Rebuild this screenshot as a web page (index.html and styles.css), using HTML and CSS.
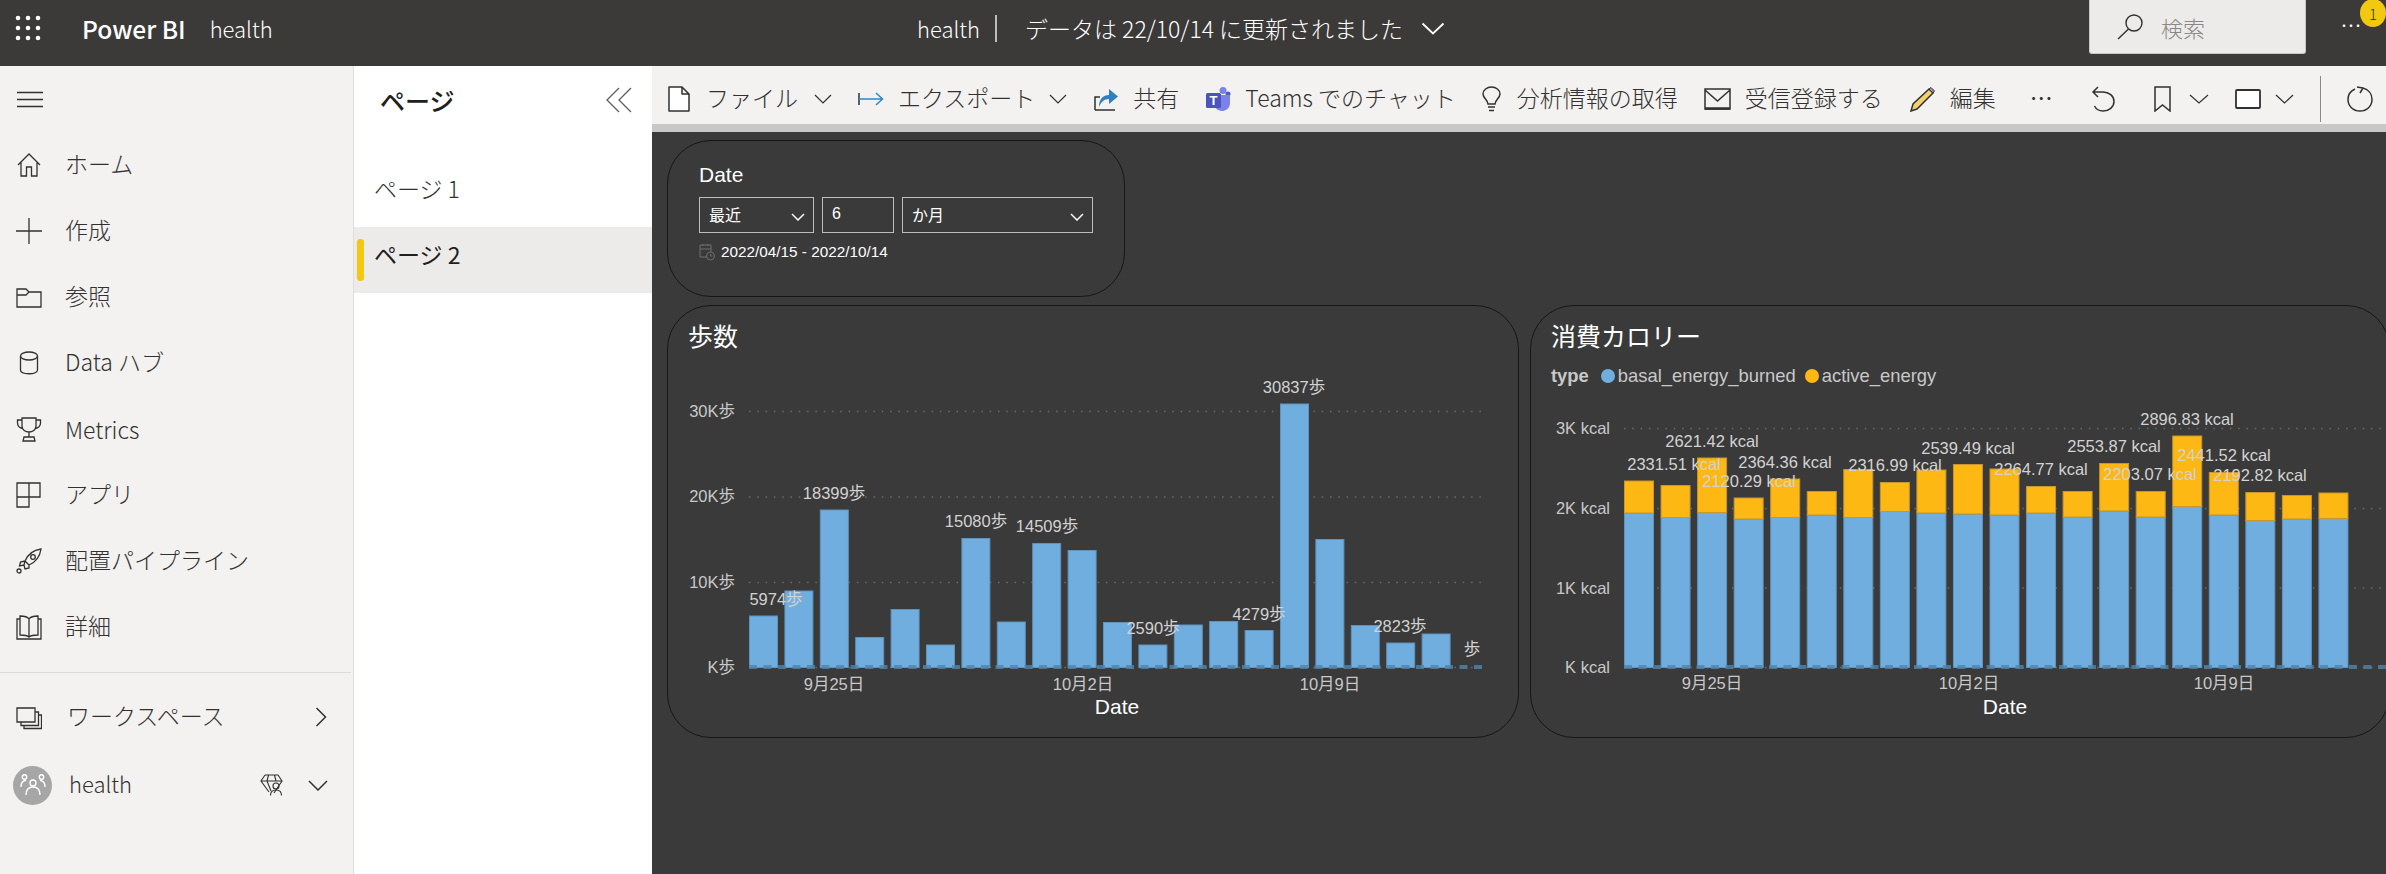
FILE: index.html
```html
<!DOCTYPE html>
<html lang="ja">
<head>
  <meta charset="UTF-8">
  <meta name="viewport" content="width=device-width, initial-scale=1.0">
  <title>health - Power BI</title>
  <link rel="stylesheet" href="styles.css">
</head>
<body>
  <!-- top bar -->
  <header class="topbar">
    <div class="brand">
      <svg class="waffle" width="26" height="26" viewBox="0 0 26 26" fill="#fff">
        <circle cx="3" cy="3" r="2.3"/><circle cx="13" cy="3" r="2.3"/><circle cx="23" cy="3" r="2.3"/>
        <circle cx="3" cy="13" r="2.3"/><circle cx="13" cy="13" r="2.3"/><circle cx="23" cy="13" r="2.3"/>
        <circle cx="3" cy="23" r="2.3"/><circle cx="13" cy="23" r="2.3"/><circle cx="23" cy="23" r="2.3"/>
      </svg>
      <span class="product">Power BI</span>
      <span class="workspace-name">health</span>
    </div>
    <div class="status">
      <span class="status-name">health</span>
      <span class="status-sep"></span>
      <span>データは 22/10/14 に更新されました</span>
      <svg width="24" height="13" viewBox="0 0 24 13" fill="none" stroke="#fff" stroke-width="1.8"><path d="M1.500 1.500 L12 11.500 L22.500 1.500"/></svg>
    </div>
    <div class="search">
      <svg width="27" height="26" viewBox="0 0 27 26" fill="none" stroke="#323130" stroke-width="1.4"><circle cx="17" cy="9" r="8"/><path d="M11.500 15 L1 25"/></svg>
      <span>検索</span>
    </div>
    <div class="more">
      <span class="more-dots">...</span>
      <span class="badge">1</span>
    </div>
  </header>

  <div class="app">
    <!-- left nav -->
    <nav class="sidebar">
      <div class="nav-toggle">
        <svg width="26" height="18" viewBox="0 0 26 18" stroke="#323130" stroke-width="1.6"><path d="M0 1.500H26M0 8.500H26M0 15.500H26"/></svg>
      </div>
      <ul class="nav-list">
        <li class="nav-item">
          <svg class="icon" viewBox="0 0 26 26"><path d="M2 13 L13 2 L24 13 M5 10 V24 H10.500 V15 H15.500 V24 H21 V10"/></svg>
          <span>ホーム</span>
        </li>
        <li class="nav-item">
          <svg class="icon" viewBox="0 0 26 26"><path d="M0 13H26M13 0V26"/></svg>
          <span>作成</span>
        </li>
        <li class="nav-item">
          <svg class="icon" viewBox="0 0 26 26"><path d="M1 5 H10 L13 8 H25 V23 H1 Z M1 11 H10 L13 8"/></svg>
          <span>参照</span>
        </li>
        <li class="nav-item">
          <svg class="icon" viewBox="0 0 26 26"><ellipse cx="13" cy="6" rx="8.500" ry="4"/><path d="M4.500 6 V20 C4.500 25 21.500 25 21.500 20 V6"/></svg>
          <span>Data ハブ</span>
        </li>
        <li class="nav-item">
          <svg class="icon" viewBox="0 0 26 26"><path d="M6 2 H20 V10 C20 14 16.500 16 13 16 C9.500 16 6 14 6 10 Z M6 4 H1.500 V7 C1.500 10 4 12 7 12.500 M20 4 H24.500 V7 C24.500 10 22 12 19 12.500 M13 16 V21 M8 21 H18 L19 25 H7 Z"/></svg>
          <span class="nav-latin">Metrics</span>
        </li>
        <li class="nav-item">
          <svg class="icon" viewBox="0 0 26 26"><path d="M1 1 H24 V15 H13 V25 H1 Z M13 1 V15 H1"/></svg>
          <span>アプリ</span>
        </li>
        <li class="nav-item">
          <svg class="icon" viewBox="0 0 26 26"><path d="M25 1 C18 2 12 6 9 13 L13 17 C20 14 24 8 25 1 Z M9 13 L4.500 14 L3.500 18 L8 17 L9 21 L13 20 L13 17 M9 13 L8 17"/><circle cx="17" cy="9" r="2.300"/><circle cx="3" cy="23" r="2"/></svg>
          <span>配置パイプライン</span>
        </li>
        <li class="nav-item">
          <svg class="icon" viewBox="0 0 26 26"><path d="M13 5 C11 2 7 2 4 2 V21 C7 21 11 21 13 23 C15 21 19 21 22 21 V2 C19 2 15 2 13 5 Z M13 5 V23 M4 5 H1 V25 H25 V5 H22"/></svg>
          <span>詳細</span>
        </li>
      </ul>
      <div class="nav-divider"></div>
      <div class="nav-item workspace-row">
        <svg class="icon" viewBox="0 0 26 26"><path d="M1 4 H19 V18 H1 Z M19 8 H22.500 V21.500 H5 V18 M22.500 11 H25.500 V24.500 H8 V21.500"/></svg>
        <span>ワークスペース</span>
        <svg class="row-end" width="12" height="20" viewBox="0 0 12 20" fill="none" stroke="#323130" stroke-width="1.500"><path d="M1.500 1 L10.500 10 L1.500 19"/></svg>
      </div>
      <div class="nav-item health-row">
        <i class="avatar">
          <svg width="26" height="24" viewBox="0 0 26 24" fill="none" stroke="#fff" stroke-width="1.400"><circle cx="13" cy="10" r="3"/><circle cx="4.500" cy="4" r="2.200"/><circle cx="21.500" cy="4" r="2.200"/><path d="M6 22 C6 16 9 14 13 14 C17 14 20 16 20 22 M1 14 C1 9 3 7.500 6 7.500 M25 14 C25 9 23 7.500 20 7.500"/></svg>
        </i>
        <span>health</span>
        <svg class="diamond" width="23" height="22" viewBox="0 0 23 22" fill="none" stroke="#323130" stroke-width="1.100"><path d="M5 1 H18 L22 7 L14 19 M5 1 L1 7 L9 18 M1 7 H22 M8.500 1 L7 7 L11 17 M14.500 1 L16 7"/><circle cx="16" cy="12" r="3"/><path d="M10.500 21.500 C10.500 17.500 13 16 16 16 C19 16 21.500 17.500 21.500 21.500"/></svg>
        <svg class="row-chevron" width="20" height="11" viewBox="0 0 20 11" fill="none" stroke="#323130" stroke-width="1.500"><path d="M1 1 L10 10 L19 1"/></svg>
      </div>
    </nav>

    <!-- pages pane -->
    <aside class="pages">
      <div class="pages-head">
        <h2>ページ</h2>
        <svg width="26" height="26" viewBox="0 0 26 26" fill="none" stroke="#605e5c" stroke-width="1.300"><path d="M13 1 L1 13 L13 25 M25 1 L13 13 L25 25"/></svg>
      </div>
      <div class="page-row"><i class="page-mark"></i><span>ページ 1</span></div>
      <div class="page-row is-active"><i class="page-mark"></i><span>ページ 2</span></div>
    </aside>

    <main class="report">
      <!-- command bar -->
      <div class="toolbar">
        <div class="tool tool-file">
          <svg width="22" height="26" viewBox="0 0 22 26" fill="#fff" stroke="#323130" stroke-width="1.500"><path d="M1 1 H14 L21 8 V25 H1 Z M14 1 V8 H21" stroke-linejoin="round"/></svg>
          <span>ファイル</span>
          <svg class="chev" width="18" height="10" viewBox="0 0 18 10" fill="none" stroke="#323130" stroke-width="1.200"><path d="M1 1 L9 9 L17 1"/></svg>
        </div>
        <div class="tool">
          <svg width="26" height="16" viewBox="0 0 26 16" fill="none" stroke-width="1.500"><path d="M1 2 V14" stroke="#323130"/><path d="M1 8 H24 M18 2 L24.500 8 L18 14" stroke="#2b88c8"/></svg>
          <span>エクスポート</span>
          <svg class="chev" width="18" height="10" viewBox="0 0 18 10" fill="none" stroke="#323130" stroke-width="1.200"><path d="M1 1 L9 9 L17 1"/></svg>
        </div>
        <div class="tool">
          <svg width="26" height="24" viewBox="0 0 26 24"><path d="M2 23 H22 M2 23 V10 H7" fill="none" stroke="#323130" stroke-width="1.500"/><path d="M6 20 C6 12 10 8 16 8 V2 L25 9.500 L16 17 V12 C11 12 8 15 6 20 Z" fill="#2f7fc1"/></svg>
          <span>共有</span>
        </div>
        <div class="tool">
          <svg width="26" height="26" viewBox="0 0 26 26"><circle cx="18" cy="4.500" r="3.500" fill="#7b83eb"/><circle cx="23" cy="8" r="2.500" fill="#5059c9"/><path d="M14 9 H25 V17 C25 23 20 25 17 25 C13 25 9 22 9 17 V9 Z" fill="#7b83eb"/><rect x="1" y="7" width="15" height="15" rx="1.500" fill="#4b53bc"/><text class="teams-t" x="8.500" y="19">T</text></svg>
          <span>Teams でのチャット</span>
        </div>
        <div class="tool tool-insight">
          <svg width="19" height="26" viewBox="0 0 19 26" fill="none" stroke="#323130" stroke-width="1.500"><path d="M6 18 C6 14 1 12 1 8 C1 4 5 1 9.500 1 C14 1 18 4 18 8 C18 12 13 14 13 18 Z M6 21 H13 M7 24.500 H12"/></svg>
          <span>分析情報の取得</span>
        </div>
        <div class="tool">
          <svg width="27" height="22" viewBox="0 0 27 22" fill="none" stroke="#323130" stroke-width="1.500"><path d="M1 1 H26 V21 H1 Z M1 2 L13.500 13 L26 2"/><path d="M1 20.500 H26" stroke-width="2.500"/></svg>
          <span>受信登録する</span>
        </div>
        <div class="tool">
          <svg width="27" height="26" viewBox="0 0 27 26"><path d="M20 3 L24 7 L8 23 L2 25 L4 18 Z" fill="#f2d06b" stroke="#323130" stroke-width="1.500"/><path d="M20 3 L22 1.500 L25.500 5 L24 7 Z" fill="#b98ac8" stroke="#323130"/></svg>
          <span>編集</span>
        </div>
        <div class="tool tool-dots"><span>…</span></div>
        <div class="tool tool-undo">
          <svg width="24" height="26" viewBox="0 0 24 26" fill="none" stroke="#323130" stroke-width="1.500"><path d="M7 1 L2 6 L7 11 M2 6 H12 C18 6 23 10 23 15.500 C23 21 18 25 12 25 C8 25 5 23 3.500 20"/></svg>
        </div>
        <div class="tool tool-mark">
          <svg width="17" height="26" viewBox="0 0 17 26" fill="none" stroke="#323130" stroke-width="1.500"><path d="M1 1 H16 V25 L8.500 19 L1 25 Z"/></svg>
          <svg class="chev" width="20" height="10" viewBox="0 0 20 10" fill="none" stroke="#323130" stroke-width="1.200"><path d="M1 1 L10 9 L19 1"/></svg>
        </div>
        <div class="tool tool-view">
          <svg width="26" height="20" viewBox="0 0 26 20" fill="#fff" stroke="#323130" stroke-width="1.800"><rect x="1" y="1" width="24" height="18" rx="1"/></svg>
          <svg class="chev" width="19" height="10" viewBox="0 0 19 10" fill="none" stroke="#323130" stroke-width="1.200"><path d="M1 1 L9.500 9 L18 1"/></svg>
        </div>
        <div class="tool-sep"></div>
        <div class="tool tool-refresh">
          <svg width="26" height="26" viewBox="0 0 26 26" fill="none" stroke="#323130" stroke-width="1.500"><path d="M8 3 C3.500 5 1 9 1 13.500 C1 20 6 25 13 25 C20 25 25 20 25 13.500 C25 8 21.500 3.500 16 2 M16 2 L10 1 M16 2 L13 7"/></svg>
        </div>
      </div>
      <div class="toolbar-edge"></div>

      <!-- canvas -->
      <div class="canvas">
        <section class="card slicer">
          <div class="slicer-title">Date</div>
          <div class="slicer-fields">
            <div class="field field-mode">
              <span>最近</span>
              <svg width="14" height="8" viewBox="0 0 14 8" fill="none" stroke="#fff" stroke-width="1.500"><path d="M1 1 L7 7 L13 1"/></svg>
            </div>
            <div class="field field-num"><span>6</span></div>
            <div class="field field-unit">
              <span>か月</span>
              <svg width="14" height="8" viewBox="0 0 14 8" fill="none" stroke="#fff" stroke-width="1.500"><path d="M1 1 L7 7 L13 1"/></svg>
            </div>
          </div>
          <div class="slicer-range">
            <svg width="16" height="18" viewBox="0 0 16 18" fill="none" stroke="#6e6e6e" stroke-width="1"><path d="M8 14 H1 V2 H12 V9 M1 6 H12 M4 1 V3 M9 1 V3"/><circle cx="11.500" cy="13" r="4"/><path d="M11.500 11 V13 H13.500"/></svg>
            <span>2022/04/15 - 2022/10/14</span>
          </div>
        </section>

        <div class="chart-row">
          <section class="card chart-card chart-steps">
            <h3 class="chart-title">歩数</h3>
            <svg id="stepsChart" class="chart" width="850" height="383" viewBox="668 353 850 383"></svg>
          </section>
          <section class="card chart-card chart-energy">
            <h3 class="chart-title">消費カロリー</h3>
            <div class="legend">
              <b>type</b>
              <span class="legend-item"><i class="dot dot-blue"></i>basal_energy_burned</span>
              <span class="legend-item"><i class="dot dot-gold"></i>active_energy</span>
            </div>
            <svg id="energyChart" class="chart" width="858" height="337" viewBox="1531 399 858 337"></svg>
          </section>
        </div>
      </div>
    </main>
  </div>

  <script src="charts.js"></script>
</body>
</html>
```

FILE: styles.css
```css
* {
  box-sizing: border-box;
}
html, body {
  margin: 0;
  height: 100%;
  overflow: hidden;
}
body {
  font-family: "Noto Sans CJK JP", sans-serif;
  font-weight: 300;
  font-size: 23px;
  color: #323130;
  background: #3a3a3a;
}

/* top bar */
.topbar {
  height: 66px;
  background: #3b3a39;
  color: #fff;
  display: flex;
  align-items: flex-start;
  position: relative;
}
.brand {
  width: 917px;
  height: 56px;
  display: flex;
  align-items: center;
  padding-left: 15px;
}
.product {
  margin-left: 41px;
  font-size: 24.500px;
  font-weight: 500;
}
.workspace-name {
  margin-left: 24px;
  font-size: 22px;
}
.status {
  height: 56px;
  display: flex;
  align-items: center;
  font-size: 23px;
}
.status-name {
  font-size: 22px;
  width: 62px;
}
.status-sep {
  width: 2px;
  height: 27px;
  background: #bdbdbd;
  margin: 0 28px 0 16px;
}
.status svg {
  margin-left: 18px;
}
.search {
  margin-left: auto;
  width: 217px;
  height: 54px;
  background: #edebe9;
  border: 1px solid #c8c6c4;
  border-top: 0;
  border-radius: 0 0 3px 3px;
  display: flex;
  align-items: center;
  padding-left: 27px;
  gap: 17px;
  font-size: 22px;
  color: #8a8886;
}
.more {
  width: 80px;
  position: relative;
  height: 54px;
}
.more-dots {
  position: absolute;
  left: 35px;
  top: -1px;
  font-size: 24px;
  letter-spacing: 1px;
  color: #fff;
}
.badge {
  position: absolute;
  right: 0;
  top: -1px;
  width: 26px;
  height: 28px;
  border-radius: 50%;
  background: #f2c811;
  color: #323130;
  font-size: 15px;
  text-align: center;
  line-height: 30px;
}

.app {
  display: flex;
  height: 808px;
}

/* left nav */
.sidebar {
  width: 354px;
  flex-shrink: 0;
  background: #f3f2f1;
  border-right: 1px solid #e1dfdd;
}
.nav-toggle {
  height: 68px;
  margin-bottom: -2px;
  display: flex;
  align-items: center;
  padding-left: 17px;
}
.nav-list {
  list-style: none;
  margin: 0;
  padding: 0;
}
.nav-item {
  height: 66px;
  display: flex;
  align-items: center;
  padding-left: 16px;
}
.nav-item span {
  padding-bottom: 5px;
}
.nav-item .nav-latin {
  padding-bottom: 1px;
}
.icon {
  width: 26px;
  height: 26px;
  margin-right: 23px;
  flex-shrink: 0;
  fill: none;
  stroke: #323130;
  stroke-width: 1.3;
}
.nav-divider {
  height: 1px;
  margin-top: 12px;
  background: #dcdbd9;
  margin-right: 2px;
}
.workspace-row {
  margin-top: 10px;
  height: 68px;
}
.workspace-row .icon {
  margin-right: 25px;
}
.row-end {
  margin-left: auto;
  margin-right: 26px;
}
.health-row {
  height: 68px;
  padding-left: 13px;
  font-size: 22px;
}
.avatar {
  width: 39px;
  height: 39px;
  border-radius: 50%;
  background: #a6a6a6;
  display: flex;
  align-items: center;
  justify-content: center;
  margin-right: 17px;
}
.diamond {
  margin-left: auto;
}
.row-chevron {
  margin: 0 25px 0 25px;
}

/* pages pane */
.pages {
  width: 298px;
  flex-shrink: 0;
  background: #fff;
}
.pages-head {
  height: 95px;
  padding: 21px 20px 0 26px;
  display: flex;
  justify-content: space-between;
  align-items: flex-start;
}
.pages-head h2 {
  margin: 0;
  font-size: 25px;
  font-weight: 500;
  line-height: 26px;
  color: #201f1e;
}
.page-row {
  height: 66px;
  display: flex;
  align-items: center;
  gap: 10px;
  padding-left: 3px;
}
.page-row span {
  padding-bottom: 12px;
}
.page-mark {
  width: 7px;
  height: 42px;
  border-radius: 3px;
}
.page-row.is-active {
  background: #edebe9;
  font-weight: 400;
  color: #201f1e;
}
.is-active .page-mark {
  background: #f2c811;
}

/* command bar */
.report {
  flex: 1;
  min-width: 0;
  overflow: hidden;
}
.toolbar {
  height: 58px;
  background: #f3f2f1;
  display: flex;
  align-items: center;
  padding: 8px 0 0 16px;
  gap: 26px;
  white-space: nowrap;
}
.tool {
  display: flex;
  align-items: center;
  gap: 14px;
}
.tool span {
  padding-bottom: 4px;
}
.tool svg {
  flex-shrink: 0;
}
.tool-file,
.tool-insight {
  gap: 16px;
}
.tool-dots {
  margin-left: 8px;
  font-weight: 400;
  width: 23px;
  justify-content: center;
}
.tool-undo {
  margin-left: 12px;
}
.tool-mark {
  margin-left: 13px;
  gap: 18px;
}
.tool-sep {
  width: 1px;
  height: 46px;
  background: #8a8886;
}
.toolbar-edge {
  height: 8px;
  background: #c8c8c8;
}

/* canvas */
.canvas {
  padding: 8px 0 0 15px;
}
.card {
  border: 1px solid #161616;
  border-radius: 44px;
  background: #3a3a3a;
}
.slicer {
  width: 458px;
  height: 157px;
  padding: 21px 0 0 31px;
  font-family: "Liberation Sans", "Noto Sans CJK JP", sans-serif;
  font-weight: 400;
  color: #fff;
}
.slicer-title {
  font-size: 21px;
  line-height: 26px;
}
.slicer-fields {
  display: flex;
  margin-top: 9px;
  gap: 8px;
}
.field {
  height: 36px;
  border: 1px solid #bdbdbd;
  font-size: 16px;
  display: flex;
  align-items: center;
  justify-content: space-between;
  padding: 0 8px 2px 9px;
}
.field-mode {
  width: 115px;
}
.field-num {
  width: 72px;
}
.field-unit {
  width: 191px;
}
.field svg {
  margin-top: 6px;
}
.slicer-range {
  display: flex;
  align-items: center;
  gap: 6px;
  margin-top: 10px;
  font-size: 15.300px;
}
.chart-row {
  display: flex;
  gap: 11px;
  margin-top: 8px;
}
.chart-card {
  height: 433px;
  flex-shrink: 0;
}
.chart-steps {
  width: 852px;
}
.chart-energy {
  width: 860px;
}
.chart-title {
  margin: 0;
  padding: 13px 0 0 20px;
  height: 47px;
  font-size: 25px;
  line-height: 32px;
  font-weight: 400;
  color: #fff;
}
.chart {
  display: block;
}
.legend {
  height: 46px;
  display: flex;
  align-items: center;
  padding-left: 20px;
  font-family: "Liberation Sans", sans-serif;
  font-weight: 400;
  font-size: 18.400px;
  color: #c8c8c8;
}
.legend b {
  margin-right: 12px;
}
.legend-item {
  display: flex;
  align-items: center;
  margin-right: 9px;
}
.dot {
  width: 14px;
  height: 14px;
  border-radius: 50%;
  margin-right: 3px;
}
.dot-blue {
  background: #70aee0;
}
.dot-gold {
  background: #fdb813;
}

/* svg chart parts */
.chart text {
  font-family: "Liberation Sans", "Noto Sans CJK JP", sans-serif;
  font-weight: 400;
  font-size: 16.500px;
  fill: #c8c8c8;
}
.chart .data-label {
  fill: #d2d2d2;
}
.chart .axis-title {
  font-size: 21px;
  fill: #fff;
}
.grid-line {
  stroke: #6a6a6a;
  stroke-width: 1.500;
  stroke-dasharray: 1.500 6.800;
}
.base-line {
  stroke: #4f86ad;
  stroke-width: 4;
  stroke-dasharray: 8 6.500;
  opacity: 0.8;
}
.bar-blue {
  fill: #70aee0;
  stroke: #5e93bd;
}
.bar-gold {
  fill: #fdb813;
  stroke: #c8962a;
}
.teams-t {
  font-family: "Liberation Sans", sans-serif;
  font-size: 13px;
  font-weight: 700;
  fill: #fff;
  text-anchor: middle;
}
```

FILE: charts.js
```js
// all chart numbers are in page pixels, the svg viewBox lines up with them
const NS = "http://www.w3.org/2000/svg";

function add(svg, tag, attrs, text) {
  const el = document.createElementNS(NS, tag);
  for (const key in attrs) el.setAttribute(key, attrs[key]);
  if (text) el.textContent = text;
  svg.appendChild(el);
  return el;
}

function label(svg, x, y, text, anchor, cls) {
  // y is the middle of the digits
  add(svg, "text", { x: x, y: y + 6, "text-anchor": anchor || "middle", class: cls || "" }, text);
}

function grid(svg, x1, x2, ys) {
  ys.forEach(function (y) {
    add(svg, "line", { x1: x1, x2: x2, y1: y, y2: y, class: "grid-line" });
  });
}

// steps
const steps = document.getElementById("stepsChart");
const stepTops = [616, 591, 510, 637.5, 609.5, 645, 538.5, 622, 543.5, 550.5, 622.5, 645, 625, 621.5, 630.5, 404, 539.5, 625.5, 643, 634];
const BASE = 667.5;

grid(steps, 749, 1485, [411.5, 497, 582.5, 667.5]);
stepTops.forEach(function (top, i) {
  add(steps, "rect", { x: 749.5 + i * 35.4, y: top, width: 28, height: BASE - top, class: "bar-blue" });
});
add(steps, "line", { x1: 749, x2: 1485, y1: 667, y2: 667, class: "base-line" });

[["30K歩", 411], ["20K歩", 496], ["10K歩", 582], ["K歩", 667]].forEach(function (t) {
  label(steps, 735, t[1], t[0], "end");
});
[
  ["5974歩", 776, 599], ["18399歩", 834, 493], ["15080歩", 976, 521], ["14509歩", 1047, 526],
  ["2590歩", 1153, 628], ["4279歩", 1259, 614], ["30837歩", 1294, 387], ["2823歩", 1400, 626],
  ["歩", 1472, 649]
].forEach(function (t) {
  label(steps, t[1], t[2], t[0], "middle", "data-label");
});
[["9月25日", 834], ["10月2日", 1083], ["10月9日", 1330]].forEach(function (t) {
  label(steps, t[1], 684, t[0]);
});
label(steps, 1117, 708, "Date", "middle", "axis-title");

// energy, top of the stack and the seam between the two series
const energy = document.getElementById("energyChart");
const stacks = [
  [481, 513], [485.5, 517.5], [458, 512.5], [498, 519], [479, 517.5],
  [491.5, 515], [469.5, 517.5], [482.5, 511.5], [470, 513], [464.5, 514],
  [469, 515], [486.5, 513], [491.5, 517], [463.5, 511], [491.5, 517],
  [436, 506.5], [472.5, 515], [492.5, 520.5], [495.5, 519], [493, 518.5]
];

grid(energy, 1624, 2386, [428.5, 508.5, 588, 667.5]);
stacks.forEach(function (s, i) {
  const x = 1624.5 + i * 36.55;
  add(energy, "rect", { x: x, y: s[1], width: 29, height: BASE - s[1], class: "bar-blue" });
  add(energy, "rect", { x: x, y: s[0], width: 29, height: s[1] - s[0], class: "bar-gold" });
});
add(energy, "line", { x1: 1624, x2: 2386, y1: 667, y2: 667, class: "base-line" });

[["3K kcal", 428], ["2K kcal", 508], ["1K kcal", 588], ["K kcal", 667]].forEach(function (t) {
  label(energy, 1610, t[1], t[0], "end");
});
[
  ["2331.51 kcal", 1674, 464], ["2621.42 kcal", 1712, 441], ["2120.29 kcal", 1749, 481],
  ["2364.36 kcal", 1785, 462], ["2316.99 kcal", 1895, 465], ["2539.49 kcal", 1968, 448],
  ["2264.77 kcal", 2041, 469], ["2553.87 kcal", 2114, 446], ["2203.07 kcal", 2150, 474],
  ["2896.83 kcal", 2187, 419], ["2441.52 kcal", 2224, 455], ["2192.82 kcal", 2260, 475]
].forEach(function (t) {
  label(energy, t[1], t[2], t[0], "middle", "data-label");
});
[["9月25日", 1712], ["10月2日", 1969], ["10月9日", 2224]].forEach(function (t) {
  label(energy, t[1], 683, t[0]);
});
label(energy, 2005, 708, "Date", "middle", "axis-title");
```
